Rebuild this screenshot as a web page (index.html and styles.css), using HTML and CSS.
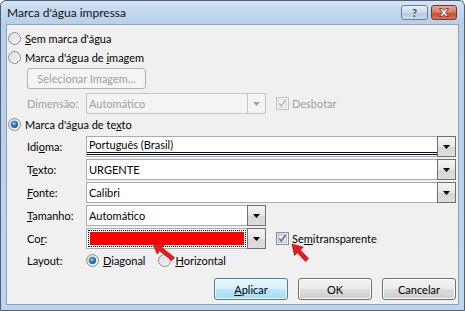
FILE: index.html
```html
<html>
<head>
    <title>Marca d'água impressa</title>
    <link rel="stylesheet" href="styles.css">
</head>
<body>
    <div class="window">
        <div class="titlebar">
            <span class="title">Marca d'água impressa</span>
            <div class="caption-buttons">
                <span class="cap help">?</span>
                <span class="cap close">
                    <svg width="12" height="9" viewBox="0 0 12 9"><path d="M1.5 0.5h2.6L6 2.6 7.9 0.5h2.6L7.4 4.5l3.1 4H7.9L6 6.4 4.1 8.5H1.5l3.1-4z" fill="#fff" stroke="#6b2417" stroke-width="0.8"/></svg>
                </span>
            </div>
        </div>
        <div class="client">
            <div class="option first">
                <svg class="radio" width="13" height="13"><use href="#radio-off"/></svg>
                <span><u>S</u>em marca d'água</span>
            </div>
            <div class="option">
                <svg class="radio" width="13" height="13"><use href="#radio-off"/></svg>
                <span>Marca d'água de <u>i</u>magem</span>
            </div>
            <div class="image-button">
                <span class="btn disabled">Selecionar Imagem...</span>
            </div>
            <div class="row spaced disabled">
                <span class="label">Dimensão:</span>
                <div class="combo short">
                    <span class="value">Automático</span>
                    <span class="drop"><svg width="7" height="4"><path d="M0 0h7L3.5 4z" fill="#a3a3a3"/></svg></span>
                </div>
                <svg class="check" width="13" height="13"><use href="#check-off-disabled"/></svg>
                <span class="check-label">Desbotar</span>
            </div>
            <div class="option tall">
                <svg class="radio" width="13" height="13"><use href="#radio-on"/></svg>
                <span>Marca d'água de te<u>x</u>to</span>
            </div>
            <div class="row first-field">
                <span class="label">Idi<u>o</u>ma:</span>
                <div class="combo wide">
                    <span class="value lang">Português (Brasil)</span>
                    <span class="drop"><svg width="7" height="4"><path d="M0 0h7L3.5 4z" fill="#000"/></svg></span>
                </div>
            </div>
            <div class="row">
                <span class="label">T<u>e</u>xto:</span>
                <div class="combo wide">
                    <span class="value">URGENTE</span>
                    <span class="drop"><svg width="7" height="4"><path d="M0 0h7L3.5 4z" fill="#000"/></svg></span>
                </div>
            </div>
            <div class="row">
                <span class="label"><u>F</u>onte:</span>
                <div class="combo wide">
                    <span class="value">Calibri</span>
                    <span class="drop"><svg width="7" height="4"><path d="M0 0h7L3.5 4z" fill="#000"/></svg></span>
                </div>
            </div>
            <div class="row">
                <span class="label"><u>T</u>amanho:</span>
                <div class="combo short">
                    <span class="value">Automático</span>
                    <span class="drop"><svg width="7" height="4"><path d="M0 0h7L3.5 4z" fill="#000"/></svg></span>
                </div>
            </div>
            <div class="row">
                <span class="label">Co<u>r</u>:</span>
                <div class="combo short">
                    <span class="value color"><span class="focus"><span class="swatch"></span></span></span>
                    <span class="drop"><svg width="7" height="4"><path d="M0 0h7L3.5 4z" fill="#000"/></svg></span>
                </div>
                <svg class="check" width="13" height="13"><use href="#check-on"/></svg>
                <span class="check-label">Se<u>m</u>itransparente</span>
            </div>
            <div class="row layout">
                <span class="label">Layout:</span>
                <svg class="radio" width="13" height="13"><use href="#radio-on"/></svg>
                <span class="radio-label"><u>D</u>iagonal</span>
                <svg class="radio second" width="13" height="13"><use href="#radio-off"/></svg>
                <span class="radio-label"><u>H</u>orizontal</span>
            </div>
            <div class="buttons">
                <span class="btn default"><u>A</u>plicar</span>
                <span class="btn">OK</span>
                <span class="btn">Cancelar</span>
            </div>
        </div>

        <!-- red arrows drawn over the screenshot -->
        <svg class="arrows" width="465" height="311">
            <polygon points="153,243 164.6,244.6 162.1,247.7 174.3,257.4 171.8,260.6 159.6,250.8 157.1,253.9" fill="#ec1b1b" stroke="#9c0a0a" stroke-width="0.7"/>
            <polygon points="292,244 303.2,247.2 300.3,249.9 308.5,258.6 305.5,261.4 297.4,252.7 294.5,255.4" fill="#ec1b1b" stroke="#9c0a0a" stroke-width="0.7"/>
        </svg>
    </div>

    <!-- shared radio / checkbox glyphs -->
    <svg width="0" height="0" class="defs">
        <defs>
            <linearGradient id="ctl-fill" x1="0" y1="0" x2="1" y2="1">
                <stop offset="0" stop-color="#d6d6d6"/>
                <stop offset="1" stop-color="#fbfbfb"/>
            </linearGradient>
            <radialGradient id="dot-fill" cx="0.4" cy="0.35" r="0.7">
                <stop offset="0" stop-color="#9bd3f7"/>
                <stop offset="0.5" stop-color="#2d83c8"/>
                <stop offset="1" stop-color="#164b7e"/>
            </radialGradient>
            <g id="radio-off">
                <circle cx="6.5" cy="6.5" r="6" fill="url(#ctl-fill)" stroke="#8e8f8f"/>
                <circle cx="6.5" cy="6.5" r="4.3" fill="none" stroke="#ececec" stroke-width="0.8"/>
            </g>
            <g id="radio-on">
                <circle cx="6.5" cy="6.5" r="6" fill="url(#ctl-fill)" stroke="#8e8f8f"/>
                <circle cx="6.5" cy="6.5" r="3.3" fill="url(#dot-fill)" stroke="#1c4e80" stroke-width="0.6"/>
            </g>
            <g id="check-on">
                <rect x="0.5" y="0.5" width="12" height="12" fill="url(#ctl-fill)" stroke="#8e8f8f"/>
                <rect x="2.5" y="2.5" width="8" height="8" fill="#dde6f2" stroke="#b9c6d8"/>
                <path d="M3.3 6.6l2 2.4 4.3-6" fill="none" stroke="#56698f" stroke-width="1.4"/>
            </g>
            <g id="check-off-disabled">
                <rect x="0.5" y="0.5" width="12" height="12" fill="#f4f4f4" stroke="#c2c2c2"/>
                <rect x="2.5" y="2.5" width="8" height="8" fill="#f0f0f0" stroke="#dcdcdc"/>
                <path d="M3.3 6.6l2 2.4 4.3-6" fill="none" stroke="#b5b5b5" stroke-width="1.3"/>
            </g>
        </defs>
    </svg>
</body>
</html>
```

FILE: styles.css
```css
body {
    margin: 0;
    font-family: Lato, "Liberation Sans", sans-serif;
    font-size: 11px;
    color: #000;
    background: #fff;
}
.defs {
    position: absolute;
}
.window {
    position: relative;
    width: 465px;
    height: 311px;
    box-sizing: border-box;
    border: 1px solid #4f5f75;
    border-radius: 6px 6px 0 0;
    background: linear-gradient(to bottom, #d3e3f4 0, #c1d7ee 12px, #b8cfe9 23px, #bfd5ec 100%);
    padding: 0 5px 5px;
    display: flex;
    flex-direction: column;
}
.titlebar {
    height: 23px;
    display: flex;
    align-items: center;
    justify-content: space-between;
}
.title {
    font-size: 12px;
    padding-left: 1px;
    color: #111;
}
.caption-buttons {
    display: flex;
    gap: 3px;
    align-self: flex-start;
    margin-top: 4px;
    margin-right: 2px;
}
.cap {
    height: 15px;
    box-sizing: border-box;
    border: 1px solid #6d7f99;
    border-radius: 3px;
    display: flex;
    align-items: center;
    justify-content: center;
}
.help {
    width: 27px;
    background: linear-gradient(to bottom, #e6eef8, #cad9ec 50%, #b4c8e2 51%, #c9daee);
    font-weight: bold;
    font-size: 11px;
    color: #2c3e5c;
    text-shadow: 0 0 2px #fff;
}
.close {
    width: 26px;
    border-color: #7a3526;
    background: linear-gradient(to bottom, #eaa796, #d6775f 50%, #c4492f 51%, #d7765c);
}
.client {
    flex: 1;
    background: #f0f0f0;
    border: 1px solid #8ea2bd;
    padding: 0 2px 0 1px;
    display: flex;
    flex-direction: column;
}
.option {
    display: flex;
    align-items: center;
    gap: 4px;
    height: 19px;
}
.option.first {
    margin-top: 4px;
}
.option.tall {
    height: 21px;
}
.radio, .check {
    flex: none;
    display: block;
}
.image-button {
    margin: 1px 0 0 19px;
    display: flex;
}
.btn {
    width: 74px;
    height: 22px;
    box-sizing: border-box;
    border: 1px solid #707070;
    border-radius: 3px;
    background: linear-gradient(to bottom, #f2f2f2 0, #ebebeb 50%, #dddddd 50%, #cfcfcf 100%);
    box-shadow: inset 0 0 0 1px #fcfcfc;
    display: flex;
    align-items: center;
    justify-content: center;
}
.btn.disabled {
    width: 119px;
    height: 21px;
    border-color: #adb2b5;
    background: #f4f4f4;
    box-shadow: none;
    color: #a0a0a0;
}
.btn.default {
    border-color: #3c7fb1;
    background: linear-gradient(to bottom, #eaf6fd 0, #d9f0fc 50%, #bee6fd 50%, #a7d9f5 100%);
    box-shadow: inset 0 0 0 1px #f2fbff;
}
.row {
    display: flex;
    align-items: center;
    height: 21px;
    margin-top: 2px;
    padding-left: 19px;
}
.row.spaced {
    margin-top: 4px;
}
.row.first-field, .row.layout {
    margin-top: 1px;
}
.row .label {
    width: 59px;
    flex: none;
}
.row.disabled {
    color: #a0a0a0;
}
.combo {
    display: flex;
    height: 21px;
    box-sizing: border-box;
    border: 1px solid #a5acb5;
    background: #fff;
}
.combo.wide {
    flex: 1;
}
.combo.short {
    width: 180px;
    flex: none;
}
.disabled .combo {
    border-color: #c3c6c9;
    background: #f4f4f4;
}
.combo .value {
    flex: 1;
    display: flex;
    align-items: center;
    padding-left: 2px;
}
.combo .value.lang {
    border-bottom: 3px double #111;
    margin-bottom: 1px;
}
.combo .value.color {
    padding: 1px;
}
.focus {
    flex: 1;
    align-self: stretch;
    border: 1px dotted #000;
    padding: 1px;
    display: flex;
}
.swatch {
    flex: 1;
    background: #ff0000;
}
.combo .drop {
    width: 17px;
    flex: none;
    margin: -1px -1px -1px 0;
    border: 1px solid #707070;
    background: linear-gradient(to bottom, #f4f4f4, #e6e6e6 50%, #d6d6d6 51%, #dedede);
    display: flex;
    align-items: center;
    justify-content: center;
}
.disabled .combo .drop {
    border-color: #c3c6c9;
    background: #f4f4f4;
}
.row .check {
    margin-left: 10px;
}
.check-label {
    margin-left: 3px;
}
.radio-label {
    margin-left: 4px;
}
.radio.second {
    margin-left: 13px;
}
.buttons {
    display: flex;
    justify-content: flex-end;
    gap: 10px;
    margin-top: 7px;
}
.arrows {
    position: absolute;
    left: -1px;
    top: -1px;
    pointer-events: none;
}
```
